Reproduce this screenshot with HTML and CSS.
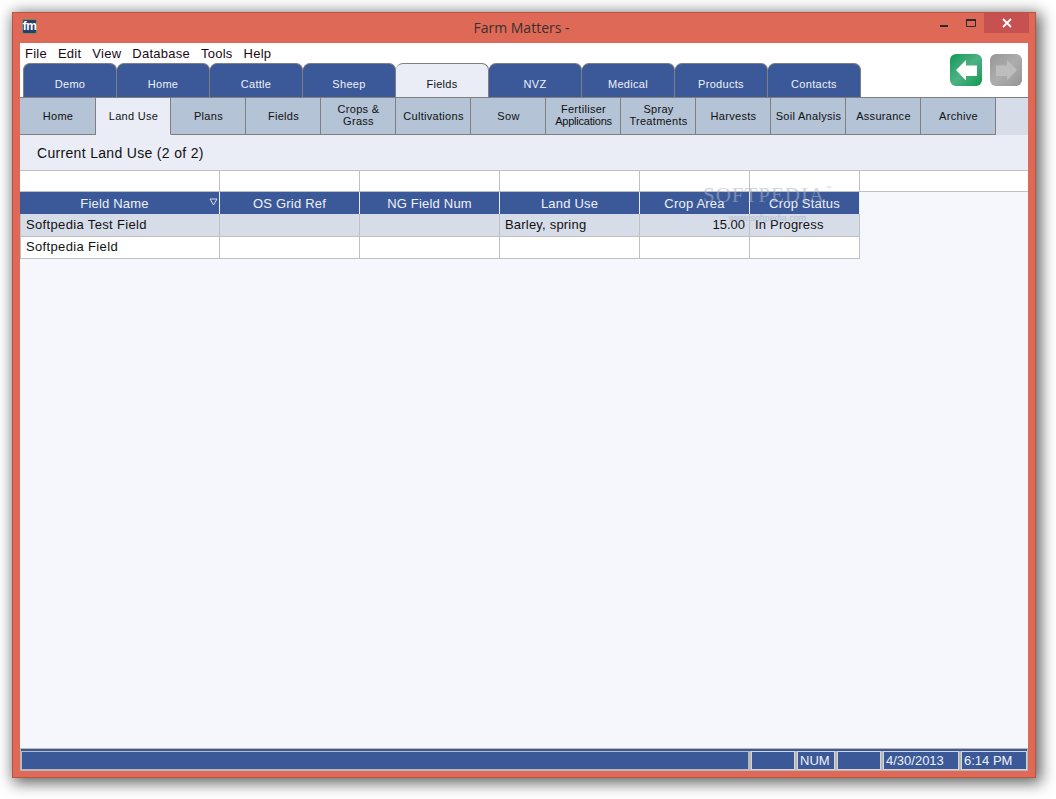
FILE: index.html
```html
<!DOCTYPE html>
<html lang="en">
<head>
<meta charset="utf-8">
<title>Farm Matters</title>
<link rel="stylesheet" href="styles.css">
</head>
<body>
<div class="window">
  <header class="titlebar">
    <div class="app-icon"><span>fm</span></div>
    <div class="title">Farm Matters -</div>
    <div class="controls">
      <div class="ctl"><svg width="10" height="10" viewBox="0 0 10 10"><rect x="1" y="7" width="8" height="2" fill="#2b2b2b"/></svg></div>
      <div class="ctl"><svg width="12" height="10" viewBox="0 0 12 10"><path d="M1.500 2h9v6.500h-9z" fill="none" stroke="#2b2b2b"/><rect x="1" y="1" width="10" height="2" fill="#2b2b2b"/></svg></div>
      <div class="ctl close"><svg width="10" height="10" viewBox="0 0 10 10"><path d="M1 1l8 8M9 1l-8 8" stroke="#fff" stroke-width="1.800"/></svg></div>
    </div>
  </header>
  <main class="client">
    <div class="top">
      <div class="top-left">
        <nav class="menu">
          <span>File</span><span>Edit</span><span>View</span><span>Database</span><span>Tools</span><span>Help</span>
        </nav>
        <div class="tabs">
          <div class="tab">Demo</div><div class="tab">Home</div><div class="tab">Cattle</div><div class="tab">Sheep</div><div class="tab active">Fields</div><div class="tab">NVZ</div><div class="tab">Medical</div><div class="tab">Products</div><div class="tab">Contacts</div>
        </div>
      </div>
      <div class="nav-buttons">
        <div class="nav-btn back"><svg width="32" height="32" viewBox="0 0 32 32"><path d="M6 16L16 6v5.500h11v10.500H16v4.500z" fill="#fff"/></svg></div>
        <div class="nav-btn forward"><svg width="32" height="32" viewBox="0 0 32 32"><path d="M27 16L17 6v5.500H6v10.500h11v4.500z" fill="#bdbdbd"/></svg></div>
      </div>
    </div>
    <div class="subtabs">
      <div class="subtab">Home</div><div class="subtab active">Land Use</div><div class="subtab">Plans</div><div class="subtab">Fields</div><div class="subtab two">Crops &amp;<br>Grass</div><div class="subtab">Cultivations</div><div class="subtab">Sow</div><div class="subtab two">Fertiliser<br><span class="tight">Applications</span></div><div class="subtab two">Spray<br>Treatments</div><div class="subtab">Harvests</div><div class="subtab">Soil Analysis</div><div class="subtab">Assurance</div><div class="subtab">Archive</div>
    </div>
    <div class="heading">Current Land Use (2 of 2)</div>
    <div class="filter-row">
      <div></div><div></div><div></div><div></div><div></div><div></div><div class="filter-rest"></div>
    </div>
    <div class="content">
      <div class="grid">
        <div class="th sorted">Field Name<svg class="sort" width="9" height="8" viewBox="0 0 9 8"><path d="M1 1h7L4.500 7z" fill="none" stroke="#d6dce8"/></svg></div>
        <div class="th">OS Grid Ref</div><div class="th">NG Field Num</div><div class="th">Land Use</div><div class="th">Crop Area</div><div class="th">Crop Status</div>
        <div class="td alt">Softpedia Test Field</div><div class="td alt"></div><div class="td alt"></div><div class="td alt">Barley, spring</div><div class="td alt num">15.00</div><div class="td alt">In Progress</div>
        <div class="td">Softpedia Field</div><div class="td"></div><div class="td"></div><div class="td"></div><div class="td"></div><div class="td"></div>
      </div>
      <div class="watermark"><div class="wm-main">SOFTPEDIA<sup>™</sup></div><div class="wm-url">www.softpedia.com</div></div>
    </div>
    <footer class="status">
      <div class="status-line"></div>
      <div class="panels">
        <div class="panel grow"></div><div class="panel w44"></div><div class="panel w38">NUM</div><div class="panel w44"></div><div class="panel w76">4/30/2013</div><div class="panel w66">6:14 PM</div>
      </div>
    </footer>
  </main>
</div>
</body>
</html>
```
FILE: styles.css
```css
* { box-sizing: border-box; }
html, body { margin: 0; height: 100%; background: #fff; overflow: hidden; }
body { padding: 12px 20px 21px 12px; font-family: "Liberation Sans", Arial, sans-serif; color: #111; }
.window {
  width: 1024px; height: 766px;
  background: #df6957;
  border: 1px solid #b9523f;
  box-shadow: 3px 3px 14px 2px rgba(0,0,0,.62);
  display: flex; flex-direction: column;
  padding: 0 7px 6px 7px;
}
.titlebar { height: 30px; display: flex; align-items: flex-start; flex: none; }
.app-icon {
  width: 15px; height: 15px; margin-top: 6px; margin-left: 2px;
  background: #2c3d70; border: 1px solid #7c8a4e; border-radius: 2px;
  display: flex; align-items: center; justify-content: center;
}
.app-icon span { color: #fff; font: bold 12px/13px "Liberation Sans", sans-serif; letter-spacing: -.5px; }
.title { flex: 1; text-align: center; font: 14px/30px "Open Sans", sans-serif; color: #3a302e; padding-left: 76px; }
.controls { display: flex; margin-right: -1px; }
.ctl { width: 27px; height: 20px; display: flex; align-items: center; justify-content: center; }
.close { width: 45px; background: #c75050; }
.client { flex: 1; background: #f5f7fc; display: flex; flex-direction: column; min-height: 0; }
.top { height: 54px; background: #fff; display: flex; justify-content: space-between; flex: none; }
.top-left { display: flex; flex-direction: column; }
.menu { height: 20px; display: flex; gap: 11px; padding-left: 5px; font-size: 13px; line-height: 21px; letter-spacing: .25px; color: #1a0a14; }
.tabs { display: flex; height: 34px; padding-left: 3px; }
.tab {
  width: 93px; height: 34px; background: #3b5998; color: #eef1f8;
  border: 1px solid #7f7f7f; border-bottom: 0; border-left-width: 0;
  border-top-right-radius: 7px; border-top-left-radius: 7px;
  font-size: 11px; letter-spacing: .3px; text-align: center; line-height: 41px;
}
.tab:first-child { width: 94px; border-left-width: 1px; }
.tab.active { background: #eaedf6; color: #111; }
.nav-buttons { display: flex; gap: 8px; padding: 11px 6px 0 0; }
.nav-btn { width: 32px; height: 32px; border-radius: 6px; }
.back { background: linear-gradient(135deg, #0f9a55 0%, #4fb184 50%, #0d9a52 100%); }
.forward { background: linear-gradient(135deg, #969696 0%, #adadad 50%, #959595 100%); }
.subtabs { height: 38px; flex: none; display: flex; background: #d6dce8; border-top: 1px solid #7f7f7f; }
.subtab {
  width: 75px; height: 37px; background: #b4c3d6; flex: none;
  border-right: 1px solid #7f7f7f; border-bottom: 1px solid #7f7f7f;
  font-size: 11px; line-height: 12px; letter-spacing: .3px; color: #111;
  display: flex; align-items: center; justify-content: center; text-align: center; padding-left: 1px;
}
.subtab.two { display: block; padding-top: 5px; }
.subtab:first-child { width: 76px; }
.subtab.active { background: #eaedf6; border-bottom-color: #eaedf6; }
.tight { letter-spacing: -.22px; }
.heading { height: 35px; flex: none; background: #eaedf6; font-size: 14px; line-height: 36px; padding-left: 17px; color: #111; letter-spacing: .32px; }
.filter-row {
  height: 22px; flex: none; background: #fff; display: grid;
  grid-template-columns: 200px 140px 140px 140px 110px 110px 1fr;
  border-top: 1px solid #c0c0c0; border-bottom: 1px solid #c0c0c0;
}
.filter-row > div { border-right: 1px solid #c0c0c0; }
.filter-row > .filter-rest { border-right: 0; }
.content { flex: 1; position: relative; min-height: 0; }
.grid { display: grid; grid-template-columns: 200px 140px 140px 140px 110px 110px; grid-template-rows: 22px 23px 22px; width: 840px; }
.th {
  background: #3b5998; color: #eef1f8; font-size: 13px; line-height: 23px; text-align: center; letter-spacing: .2px;
  border-right: 1px solid #eaedf6; position: relative;
}
.sort { position: absolute; right: 1px; top: 6px; }
.sorted { padding-right: 10px; }
.th:last-of-type { border-right: 0; }
.td {
  background: #fff; font-size: 13px; line-height: 19px; letter-spacing: .2px; padding: 0 5px; color: #111; white-space: nowrap;
  border-right: 1px solid #c0c0c0; border-bottom: 1px solid #c0c0c0;
}
.td:nth-child(6n+1) { border-left: 1px solid #c0c0c0; letter-spacing: .35px; }
.td.alt { background: #d6dce8; line-height: 21px; }
.td.num { text-align: right; padding-right: 4px; letter-spacing: 0; }
.watermark { position: absolute; left: 683px; top: -7px; color: #a9b2c6; opacity: .55; text-align: center; pointer-events: none; }
.wm-main { font: 21px/20px "Liberation Serif", serif; letter-spacing: 1px; }
.wm-main sup { font: 6px/6px "Liberation Sans", sans-serif; vertical-align: top; }
.wm-url { font-size: 9px; line-height: 10px; margin-top: 8px; color: #9aa5c0; }
.status { flex: none; height: 23px; background: #b9b9b9; display: flex; flex-direction: column; }
.status-line { height: 2px; margin: 1px 1px 0; background: #3b5998; flex: none; }
.panels { flex: 1; display: flex; gap: 2px; padding: 0 1px 1px 1px; }
.panel { background: #3b5998; color: #eef1f8; font-size: 13px; line-height: 17px; padding-left: 2px; border: 1px solid #d4d4d4; }
.panel.grow { flex: 1; border-color: #b9b9b9; }
.w44 { width: 44px; }
.w38 { width: 38px; }
.w76 { width: 76px; }
.w66 { width: 66px; }
```
